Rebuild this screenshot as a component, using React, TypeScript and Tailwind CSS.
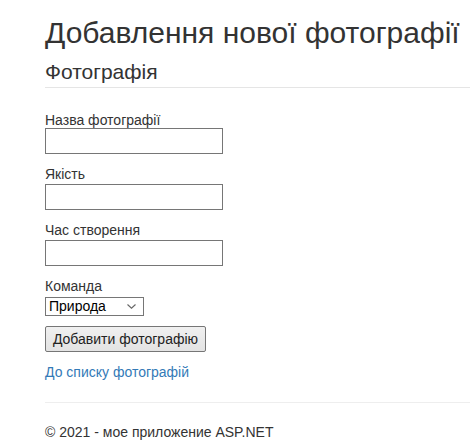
import React from "react";

export default function App() {
  const font = { fontFamily: '"Liberation Sans", Arial, Helvetica, sans-serif' };
  return (
    <div className="min-h-[441px] w-[470px] overflow-hidden bg-white text-[#333]" style={font}>
      <div className="pl-[45px] pt-[16px]">
        <h2 className="whitespace-nowrap text-[30px] font-normal leading-[33px]">Добавлення нової фотографії</h2>
        <h4 className="mt-[11px] text-[21px] font-normal leading-[24px]">Фотографія</h4>
        <div className="mt-[3px] border-t border-[#e5e5e5]" />

        <form className="mt-[24px] flex flex-col">
          <div className="flex flex-col">
            <label className="text-[14px] leading-[16px]">Назва фотографії</label>
            <input type="text" className="h-[26px] w-[178px] border border-[#767676] bg-white px-1 text-[14px] outline-none" />
          </div>
          <div className="mt-[12px] flex flex-col">
            <label className="text-[14px] leading-[16px]">Якість</label>
            <input type="text" className="mt-[2px] h-[26px] w-[178px] border border-[#767676] bg-white px-1 text-[14px] outline-none" />
          </div>
          <div className="mt-[12px] flex flex-col">
            <label className="text-[14px] leading-[16px]">Час створення</label>
            <input type="text" className="mt-[2px] h-[26px] w-[178px] border border-[#767676] bg-white px-1 text-[14px] outline-none" />
          </div>
          <div className="mt-[12px] flex flex-col">
            <label className="text-[14px] leading-[16px]">Команда</label>
            <div className="relative mt-[3px] w-[99px]">
              <select
                defaultValue="Природа"
                className="block h-[19px] w-[99px] appearance-none rounded-none border border-[#767676] bg-white pl-[3px] text-[14px] leading-[17px] text-black outline-none"
                style={font}
              >
                <option>Природа</option>
                <option>Місто</option>
                <option>Люди</option>
              </select>
              <svg
                className="pointer-events-none absolute right-[8px] top-[7px]"
                width="9"
                height="5"
                viewBox="0 0 9 5"
                fill="none"
              >
                <path d="M0.5 0.5 L4.5 4.2 L8.5 0.5" stroke="#666" strokeWidth="1.1" />
              </svg>
            </div>
          </div>
          <div className="mt-[10px]">
            <button
              type="button"
              className="h-[26px] w-[161px] rounded-[2px] border border-[#767676] bg-gradient-to-b from-[#f0f0f0] to-[#e3e3e3] text-[14px] leading-[16px] text-[#222]"
              style={font}
            >
              Добавити фотографію
            </button>
          </div>
        </form>

        <div className="mt-[10px] text-[14px] leading-[20px]">
          <a href="#" className="text-[#337ab7]">До списку фотографій</a>
        </div>

        <div className="mt-[20px] border-t border-[#eeeeee]" />
        <footer className="mt-[19px] text-[14px] leading-[20px]">© 2021 - мое приложение ASP.NET</footer>
      </div>
    </div>
  );
}
